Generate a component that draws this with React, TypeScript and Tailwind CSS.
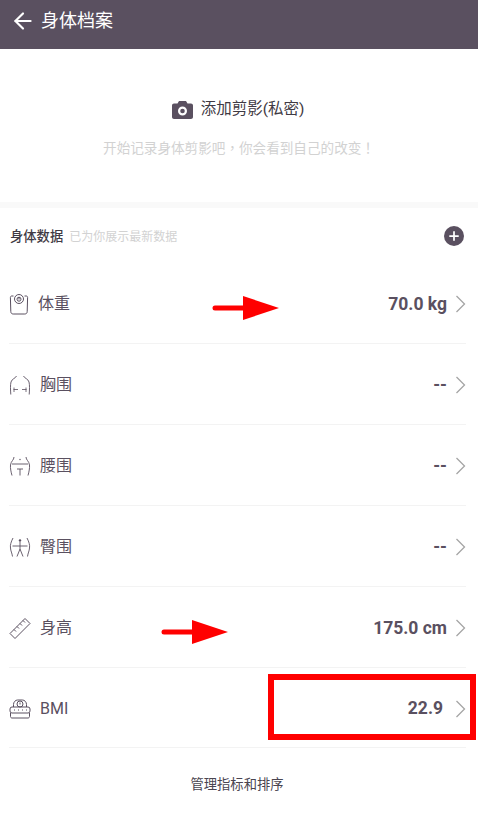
import React from 'react';
import { ArrowLeft, Plus } from 'lucide-react';

const cjk = { fontFamily: '"Roboto", "Noto Sans CJK SC", sans-serif' };

function ScaleIcon() {
  return (
    <svg width="20" height="21" viewBox="0 0 20 21" fill="none" stroke="#5a5060" strokeWidth="1">
      <path d="M4.500 2H2.800C1.900 2 1.400 2.600 1.400 3.500L1.800 17.500c0 1.500.9 2.500 2.400 2.500h11.600c1.500 0 2.400-1 2.400-2.500l.4-14c0-.9-.5-1.500-1.400-1.500h-1.700" />
      <circle cx="10" cy="5" r="4.500" />
      <circle cx="10" cy="5.200" r="2" />
      <path d="M10 3v2.500" />
    </svg>
  );
}

function ChestIcon() {
  return (
    <svg width="22" height="20" viewBox="0 0 22 20" fill="none" stroke="#5a5060" strokeWidth="0.9">
      <path d="M7.500 1C6.500 3.500 3 3.500 2 7 1.200 10 1.500 15 1.800 19.500M14.500 1c1 2.500 4.500 2.500 5.500 6 .8 3 .5 8 .2 12.500" />
      <path d="M4.500 14.500h4.500M13 14.500h4.500M5 12.500v4.500M17 12.500v4.500" strokeWidth="0.8" />
    </svg>
  );
}

function WaistIcon() {
  return (
    <svg width="22" height="20" viewBox="0 0 22 20" fill="none" stroke="#5a5060" strokeWidth="0.9">
      <path d="M5 1C5 4 2 5 1.500 9 1.200 12 2 16 3 19.500M17 1c0 3 3 4 3.500 8 .3 3-.5 7-1.500 10.500" />
      <path d="M3 8h16M8 13h6M11 13v6.500" />
      <circle cx="11" cy="3.500" r="0.700" fill="#5a5060" stroke="none" />
    </svg>
  );
}

function HipIcon() {
  return (
    <svg width="22" height="20" viewBox="0 0 22 20" fill="none" stroke="#5a5060" strokeWidth="0.9">
      <path d="M4 1C2 5 1 8 1.500 11c.2 3 1.500 5 2 8.500M18 1c2 4 3 7 2.500 10-.2 3-1.500 5-2 8.500" />
      <circle cx="11" cy="3.500" r="1.200" fill="#5a5060" stroke="none" />
      <path d="M3.500 9h15M11 5v7M11 12l-3 7.500M11 12l3 7.500" />
    </svg>
  );
}

function RulerIcon() {
  return (
    <svg width="22" height="22" viewBox="0 0 22 22" fill="none" stroke="#5a5060" strokeWidth="1">
      <path d="M1 16.500 16 1.500l5 5L6 21.500z" strokeLinejoin="round" />
      <path d="M5 12.500l2 2M8 9.500l2 2M11 6.500l2 2M14 3.500l2 2" />
    </svg>
  );
}

function BmiIcon() {
  return (
    <svg width="22" height="20" viewBox="0 0 22 20" fill="none" stroke="#5a5060" strokeWidth="1">
      <path d="M4.500 8V5.500c0-2.500 2-4.500 4-4.500h5c2 0 4 2 4 4.500V8" />
      <circle cx="11" cy="5" r="3" />
      <path d="M11 3.500v2" />
      <rect x="1" y="8" width="20" height="6" rx="2" />
      <path d="M1.500 14v3.500c0 1 .8 1.500 1.500 1.500h16c.7 0 1.500-.5 1.500-1.500V14" />
      <path d="M5 11h1M9 11h1M13 11h1M17 11h1" />
    </svg>
  );
}

function Chevron() {
  return (
    <svg className="ml-[8px] shrink-0" width="11" height="18" viewBox="0 0 11 18" fill="none" stroke="#a5a5a5" strokeWidth="1.300">
      <path d="M1.500 1l8 8-8 8" />
    </svg>
  );
}

function RedArrow({ className }: { className: string }) {
  return (
    <svg className={className} width="68" height="26" viewBox="0 0 68 26">
      <path d="M3 13h34" stroke="#ff0000" strokeWidth="5" strokeLinecap="round" />
      <path d="M31 1l36 12-36 12z" fill="#ff0000" />
    </svg>
  );
}

const rows = [
  { icon: <ScaleIcon />, name: '体重', value: '70.0 kg', gap: 'ml-[7px]', pad: '' },
  { icon: <ChestIcon />, name: '胸围', value: '--', gap: 'ml-[9px]', pad: '' },
  { icon: <WaistIcon />, name: '腰围', value: '--', gap: 'ml-[9px]', pad: '' },
  { icon: <HipIcon />, name: '臀围', value: '--', gap: 'ml-[9px]', pad: '' },
  { icon: <RulerIcon />, name: '身高', value: '175.0 cm', gap: 'ml-[9px]', pad: '' },
  { icon: <BmiIcon />, name: 'BMI', value: '22.9', gap: 'ml-[9px]', pad: 'mr-[4px]' },
];

export default function App() {
  return (
    <div className="relative w-[478px] h-[816px] overflow-hidden bg-white" style={cjk}>
      <div className="h-[49px] bg-[#5a5060] flex items-center pb-[8px] pl-[10px] text-white">
        <ArrowLeft className="w-[26px] h-[26px]" strokeWidth={2} />
        <span className="ml-[5px] text-[18px] leading-none">身体档案</span>
      </div>

      <div className="h-[153px] flex flex-col items-center pt-[50px]">
        <div className="flex items-center h-[22px] pr-[2px]">
          <svg width="21" height="18" viewBox="0 0 21 18">
            <path
              fillRule="evenodd"
              fill="#5a5060"
              d="M7 0h7l1.500 2.500H19c1.100 0 2 .9 2 2V16c0 1.100-.9 2-2 2H2c-1.100 0-2-.9-2-2V4.500c0-1.100.9-2 2-2h3.500zM10.500 5.500a4.500 4.500 0 1 0 0 9 4.500 4.500 0 0 0 0-9zm0 2.200a2.300 2.300 0 1 1 0 4.600 2.300 2.300 0 0 1 0-4.600z"
            />
          </svg>
          <span className="ml-[8px] text-[15.500px] leading-none text-[#3f3a44]">添加剪影(私密)</span>
        </div>
        <p className="mt-[16px] text-[13.600px] leading-[20px] text-[#d2d2d2] [font-family:'Noto_Sans_CJK_TC',sans-serif]">开始记录身体剪影吧，你会看到自己的改变！</p>
      </div>

      <div className="h-[6px] bg-[#f9f9f9]" />

      <div className="h-[55px] pl-[10px] pr-[14px] flex items-center justify-between">
        <div className="flex items-center pt-[2px]">
          <span className="text-[13.300px] font-medium text-[#3f3a44]">身体数据</span>
          <span className="ml-[6px] text-[12px] text-[#d2d2d2]">已为你展示最新数据</span>
        </div>
        <span className="w-[20px] h-[20px] rounded-full bg-[#5a5060] flex items-center justify-center">
          <Plus className="w-[14px] h-[14px] text-white" strokeWidth={3} />
        </span>
      </div>

      <div className="ml-[9px] mr-[12px]">
        {rows.map(row => (
          <div key={row.name} className="h-[81px] last:h-[80px] pt-[2px] flex items-center border-b border-[#f3f3f3]">
            <span className="w-[22px] flex justify-start">{row.icon}</span>
            <span className={`${row.gap} text-[16px] text-[#5a5060]`}>{row.name}</span>
            <span className={`ml-auto text-[17.500px] font-bold text-[#5a5060] ${row.pad}`}>{row.value}</span>
            <Chevron />
          </div>
        ))}
      </div>

      <div className="pt-[27px] pr-[4px] text-center text-[13.300px] leading-[20px] text-[#4a4550]">管理指标和排序</div>

      <RedArrow className="absolute left-[212px] top-[295px]" />
      <RedArrow className="absolute left-[161px] top-[619px]" />
      <div className="absolute left-[268px] top-[674px] w-[208px] h-[66px] border-[6px] border-[#ff0000]" />
    </div>
  );
}
